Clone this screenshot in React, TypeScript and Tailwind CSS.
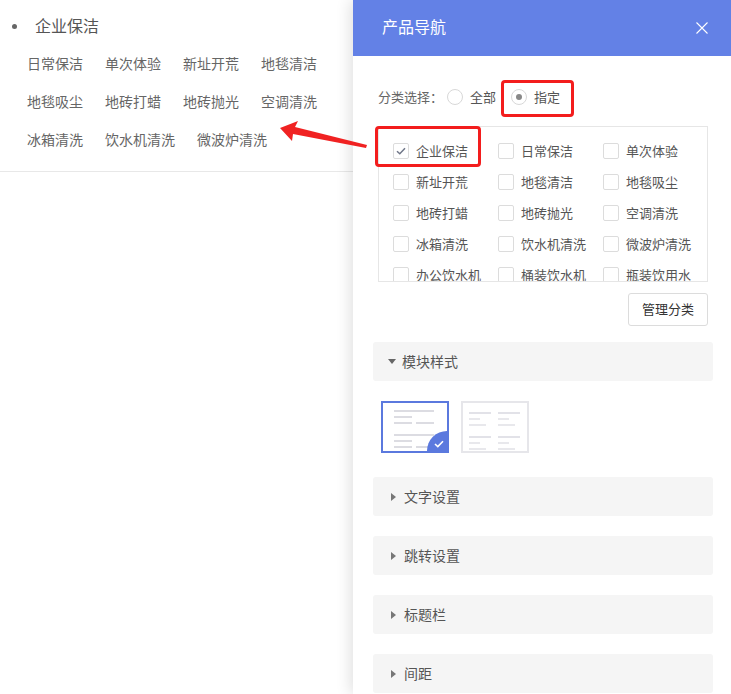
import React from 'react';

const subItems = [
  ['日常保洁', '单次体验', '新址开荒', '地毯清洁'],
  ['地毯吸尘', '地砖打蜡', '地砖抛光', '空调清洗'],
  ['冰箱清洗', '饮水机清洗', '微波炉清洗'],
];

const categories = [
  '企业保洁', '日常保洁', '单次体验',
  '新址开荒', '地毯清洁', '地毯吸尘',
  '地砖打蜡', '地砖抛光', '空调清洗',
  '冰箱清洗', '饮水机清洗', '微波炉清洗',
  '办公饮水机', '桶装饮水机', '瓶装饮用水',
];

const font = { fontFamily: '"Microsoft YaHei", "Noto Sans CJK SC", "Noto Sans", sans-serif' };

const Checkbox = ({ checked }: { checked?: boolean }) => (
  <span className="w-4 h-4 border border-[#dcdcdc] rounded-[2px] bg-white flex items-center justify-center shrink-0">
    {checked && (
      <svg width="10" height="8" viewBox="0 0 10 8" fill="none">
        <path d="M1 4.2 L3.8 6.8 L9 1.2" stroke="#707789" strokeWidth="1.5" />
      </svg>
    )}
  </span>
);

const Section = ({ title, open }: { title: string; open?: boolean }) => (
  <div className="h-[39px] bg-[#f5f5f5] rounded-[3px] flex items-center pl-[15px] text-[14px] text-[#555] leading-none">
    {open ? (
      <svg width="8" height="5" viewBox="0 0 8 5" className="mr-[6px]">
        <path d="M0 0 L8 0 L4 5 Z" fill="#666" />
      </svg>
    ) : (
      <svg width="5" height="8" viewBox="0 0 5 8" className="ml-[3px] mr-[8px]">
        <path d="M0 0 L5 4 L0 8 Z" fill="#777" />
      </svg>
    )}
    <span className="pb-[2px]">{title}</span>
  </div>
);

const Line = ({ w }: { w: string }) => <div className={`h-[2px] bg-[#dcdce2] ${w}`} />;

const ThumbOne = () => (
  <div className="relative w-[68px] h-[52px] border-2 border-[#5b79de] overflow-hidden bg-white">
    <div className="flex flex-col gap-[4px] pl-[11px] pt-[7px]">
      <Line w="w-[40px]" />
      <Line w="w-[18px]" />
      <div className="flex gap-[4px]"><Line w="w-[18px]" /><Line w="w-[18px]" /></div>
      <div className="h-[2px]" />
      <Line w="w-[40px]" />
      <Line w="w-[18px]" />
      <div className="flex gap-[4px]"><Line w="w-[18px]" /><Line w="w-[18px]" /></div>
    </div>
    <div className="absolute -right-[20px] -bottom-[20px] w-[40px] h-[40px] rounded-full bg-[#5b79de]" />
    <svg width="10" height="8" viewBox="0 0 10 8" className="absolute right-[3px] bottom-[3px]" fill="none">
      <path d="M1 4 L3.8 6.6 L9 1.2" stroke="#fff" strokeWidth="1.6" />
    </svg>
  </div>
);

const ThumbCol = () => (
  <div className="flex flex-col gap-[4px]">
    <div className="h-[2px] w-[22px] bg-[#e2e2e8]" />
    <div className="h-[2px] w-[11px] bg-[#e8e8ec]" />
    <div className="h-[2px] w-[17px] bg-[#e8e8ec]" />
    <div className="h-[2px]" />
    <div className="h-[2px] w-[22px] bg-[#e2e2e8]" />
    <div className="h-[2px] w-[11px] bg-[#e8e8ec]" />
    <div className="h-[2px] w-[17px] bg-[#e8e8ec]" />
  </div>
);

const ThumbTwo = () => (
  <div className="w-[68px] h-[52px] border-2 border-[#e6e6ea] bg-white flex gap-[7px] pl-[6px] pt-[9px]">
    <ThumbCol />
    <ThumbCol />
  </div>
);

export default function App() {
  return (
    <div className="relative flex w-full h-[694px] bg-white overflow-hidden" style={font}>
      {/* preview area */}
      <div className="flex-1 min-w-0">
        <div className="border-b border-[#e8e8e8] pb-[12px]">
          <div className="flex items-center h-[52px] pl-[12px] pb-[2px]">
            <span className="w-[5px] h-[5px] rounded-full bg-[#666] mr-[18px] mt-[2px]" />
            <span className="text-[16px] text-[#555] leading-none">企业保洁</span>
          </div>
          <div className="flex flex-col pl-[27px] -mt-[7px]">
            {subItems.map((row, i) => (
              <div key={i} className="flex gap-[22px] h-[38px] items-center">
                {row.map((t) => (
                  <span key={t} className="text-[14px] text-[#666] leading-none pb-[2px]">{t}</span>
                ))}
              </div>
            ))}
          </div>
        </div>
      </div>

      {/* settings panel */}
      <div className="w-[378px] shrink-0 bg-white shadow-[-3px_0_14px_rgba(0,0,0,0.12)] flex flex-col z-10">
        <div className="h-[56px] bg-[#6381e6] flex items-center justify-between pl-[29px] pr-[23px]">
          <span className="text-[16px] text-white leading-none pb-[5px]">产品导航</span>
          <svg width="12" height="12" viewBox="0 0 12 12">
            <path d="M0.5 0.5 L11.5 11.5 M11.5 0.5 L0.5 11.5" stroke="#fff" strokeWidth="1.1" />
          </svg>
        </div>

        <div className="pl-5 pr-[18px] flex flex-col">
          <div className="px-[5px] flex flex-col">
            <div className="flex items-center h-5 mt-[31px] text-[13px] text-[#666] leading-none">
              <span className="pb-[2px]">分类选择：</span>
              <span className="w-4 h-4 rounded-full border border-[#d8d8d8] ml-[4px]" />
              <span className="ml-[7px] text-[#555] pb-[2px]">全部</span>
              <span className="relative flex items-center ml-[15px]">
                <span className="w-4 h-4 rounded-full border border-[#d8d8d8] flex items-center justify-center">
                  <span className="w-[6px] h-[6px] rounded-full bg-[#888]" />
                </span>
                <span className="ml-[7px] text-[#555] pb-[2px]">指定</span>
                <span className="absolute -left-[10px] -top-[9px] w-[73px] h-[37px] border-[3px] border-[#f31d1d] rounded-[4px]" />
              </span>
            </div>

            <div className="relative mt-[19px] h-[156px] border border-[#e6e6e6]">
              <div className="h-full overflow-hidden">
                <div className="grid grid-cols-[105px_105px_105px] pl-[14px] pt-[8px]">
                  {categories.map((c, i) => (
                    <div key={c} className="flex items-center h-[31px] gap-[7px]">
                      <Checkbox checked={i === 0} />
                      <span className="text-[13px] text-[#555] leading-none whitespace-nowrap pb-[1px]">{c}</span>
                    </div>
                  ))}
                </div>
              </div>
              <span className="absolute -left-[4px] -top-[1px] w-[106px] h-[41px] border-[3px] border-[#f31d1d] rounded-[4px]" />
            </div>

            <div className="flex justify-end mt-[11px]">
              <button className="w-[80px] h-[33px] border border-[#dcdcdc] rounded-[3px] bg-white text-[13px] text-[#333] leading-none pb-[2px]">
                管理分类
              </button>
            </div>
          </div>

          <div className="mt-[16px]">
            <Section title="模块样式" open />
          </div>
          <div className="flex gap-[12px] pl-[8px] mt-[20px]">
            <ThumbOne />
            <ThumbTwo />
          </div>
          <div className="flex flex-col gap-[20px] mt-[24px]">
            <Section title="文字设置" />
            <Section title="跳转设置" />
            <Section title="标题栏" />
            <Section title="间距" />
          </div>
        </div>
      </div>

      {/* annotation arrow */}
      <svg className="absolute left-0 top-0 pointer-events-none z-20" width="731" height="694">
        <polygon
          points="280,128 298,121 295,127 367,145 366,148 293,134 292,141"
          fill="#f02222"
        />
      </svg>
    </div>
  );
}
